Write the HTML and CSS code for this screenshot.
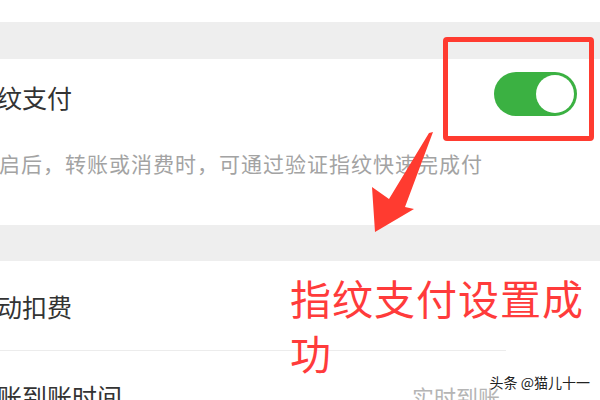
FILE: index.html
```html
<!DOCTYPE html>
<html lang="zh-CN">
<head>
    <meta charset="UTF-8">
    <meta name="viewport" content="width=device-width, initial-scale=1.0">
    <title>指纹支付</title>
    <link rel="stylesheet" href="styles.css">
</head>
<body>
    <div class="page">
        <div class="top-space"></div>
        <div class="band"></div>

        <!-- 指纹支付开关 -->
        <div class="section">
            <div class="row row-switch">
                <span class="label">指纹支付</span>
                <div class="switch on"></div>
            </div>
            <p class="desc">开启后，转账或消费时，可通过验证指纹快速完成付款</p>
        </div>

        <div class="band band-2"></div>

        <div class="section">
            <div class="row row-plain">
                <span class="label">自动扣费</span>
            </div>
            <div class="divider"></div>
            <div class="row row-plain">
                <span class="label">转账到账时间</span>
                <span class="value">实时到账</span>
            </div>
        </div>

        <!-- 标注 -->
        <div class="mark-box"></div>
        <svg class="mark-arrow" width="600" height="400" viewBox="0 0 600 400">
            <polygon points="433,132 405,207 414,209 375,232 372,187 389,199 429,133" fill="#ff3b30"/>
        </svg>
        <div class="mark-text">指纹支付设置成功</div>
        <div class="watermark">头条 @猫儿十一</div>
    </div>
</body>
</html>
```

FILE: styles.css
```css
* {
    box-sizing: border-box;
    margin: 0;
    padding: 0;
    font-family: "Noto Sans CJK SC", "Noto Sans", sans-serif;
}

body {
    background-color: white;
    width: 600px;
    height: 400px;
    overflow: hidden;
}

.page {
    position: relative;
    width: 600px;
    height: 400px;
    overflow: hidden;
}

.top-space {
    height: 22px;
    background-color: white;
}

.band {
    height: 37px;
    background-color: #eeeeee;
}

.band-2 {
    height: 36px;
}

.section {
    background-color: white;
}

.row {
    display: flex;
    align-items: center;
    justify-content: space-between;
}

.row-switch {
    height: 76px;
    padding-right: 23px;
}

.row-plain {
    height: 89px;
    padding-right: 100px;
}

.label {
    margin-left: -28px;
    font-size: 25px;
    color: #333;
    white-space: nowrap;
}

.switch {
    position: relative;
    width: 83px;
    height: 44px;
    margin-bottom: 6px;
    border-radius: 22px;
    background-color: #3bb142;
}

.switch::after {
    content: "";
    position: absolute;
    top: 3px;
    right: 3px;
    width: 38px;
    height: 38px;
    border-radius: 50%;
    background-color: white;
}

.desc {
    width: 512px;
    margin-left: -23px;
    padding-top: 14px;
    padding-bottom: 20px;
    font-size: 21px;
    line-height: 28px;
    letter-spacing: 1px;
    color: #a3a3a3;
}

.divider {
    width: 506px;
    height: 1px;
    background-color: #ececec;
}

.value {
    font-size: 22px;
    color: #b5b5b5;
}

.mark-box {
    position: absolute;
    left: 443px;
    top: 37px;
    width: 151px;
    height: 104px;
    border: 5px solid #ff3b30;
    border-radius: 4px;
}

.mark-arrow {
    position: absolute;
    left: 0;
    top: 0;
}

.mark-text {
    position: absolute;
    left: 290px;
    top: 270px;
    width: 300px;
    font-size: 41px;
    line-height: 55px;
    letter-spacing: 1px;
    color: #ff3b3b;
}

.watermark {
    position: absolute;
    right: 10px;
    top: 372px;
    font-size: 14px;
    color: #222;
    text-shadow: 0 0 2px white, 0 0 2px white, 0 0 3px white;
}
```
